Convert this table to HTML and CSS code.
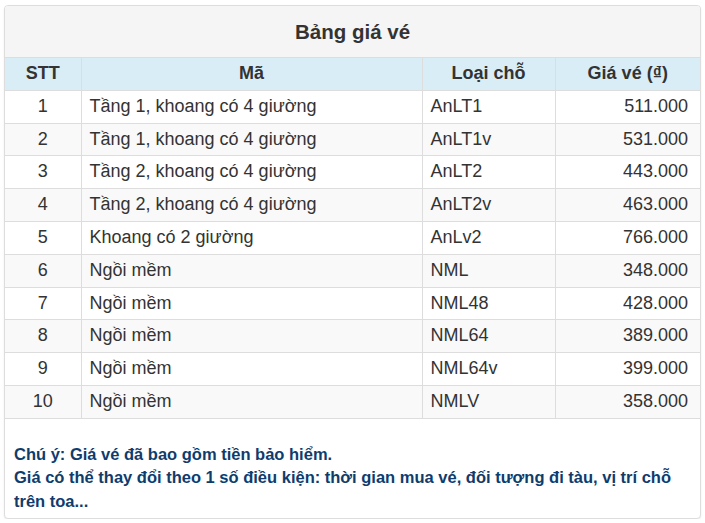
FILE: index.html
```html
<!DOCTYPE html>
<html lang="vi">
<head>
<meta charset="utf-8">
<link rel="stylesheet" href="styles.css">
</head>
<body>
<div class="panel">
  <div class="panel-heading">Bảng giá vé</div>
  <table class="price-table">
    <colgroup>
      <col class="c-stt"><col class="c-ma"><col class="c-loai"><col class="c-gia">
    </colgroup>
    <thead>
      <tr><th>STT</th><th>Mã</th><th>Loại chỗ</th><th>Giá vé (₫)</th></tr>
    </thead>
    <tbody>
      <tr><td class="num">1</td><td>Tầng 1, khoang có 4 giường</td><td>AnLT1</td><td class="price">511.000</td></tr>
      <tr><td class="num">2</td><td>Tầng 1, khoang có 4 giường</td><td>AnLT1v</td><td class="price">531.000</td></tr>
      <tr><td class="num">3</td><td>Tầng 2, khoang có 4 giường</td><td>AnLT2</td><td class="price">443.000</td></tr>
      <tr><td class="num">4</td><td>Tầng 2, khoang có 4 giường</td><td>AnLT2v</td><td class="price">463.000</td></tr>
      <tr><td class="num">5</td><td>Khoang có 2 giường</td><td>AnLv2</td><td class="price">766.000</td></tr>
      <tr><td class="num">6</td><td>Ngồi mềm</td><td>NML</td><td class="price">348.000</td></tr>
      <tr><td class="num">7</td><td>Ngồi mềm</td><td>NML48</td><td class="price">428.000</td></tr>
      <tr><td class="num">8</td><td>Ngồi mềm</td><td>NML64</td><td class="price">389.000</td></tr>
      <tr><td class="num">9</td><td>Ngồi mềm</td><td>NML64v</td><td class="price">399.000</td></tr>
      <tr><td class="num">10</td><td>Ngồi mềm</td><td>NMLV</td><td class="price">358.000</td></tr>
    </tbody>
  </table>
  <div class="note">
    <p>Chú ý: Giá vé đã bao gồm tiền bảo hiểm.</p>
    <p>Giá có thể thay đổi theo 1 số điều kiện: thời gian mua vé, đối tượng đi tàu, vị trí chỗ trên toa...</p>
  </div>
</div>
</body>
</html>
```
FILE: styles.css
```css
html, body {
  margin: 0;
  padding: 0;
  background: #fff;
}
body {
  padding: 5px 4px 0 4px;
  font-family: "Liberation Sans", Arial, sans-serif;
  color: #333;
}
.panel {
  width: 697px;
  height: 514px;
  box-sizing: border-box;
  border: 1px solid #ddd;
  border-radius: 4px;
  box-shadow: 0 1px 2px rgba(0,0,0,0.08);
  overflow: hidden;
  background: #fff;
}
.panel-heading {
  background: #f5f5f5;
  border-bottom: 1px solid #ddd;
  height: 52px;
  box-sizing: border-box;
  display: flex;
  align-items: center;
  justify-content: center;
  font-weight: bold;
  font-size: 20.5px;
  color: #333;
  padding-top: 1px;
}
.price-table {
  width: 100%;
  border-collapse: collapse;
  font-size: 18px;
  table-layout: fixed;
}
.c-stt { width: 76px; }
.c-ma { width: 341px; }
.c-loai { width: 133px; }
.c-gia { width: auto; }
.price-table th, .price-table td {
  border: 1px solid #ddd;
  padding: 4px 8px;
  line-height: 23.8px;
  height: 23.8px;
  white-space: nowrap;
}
.price-table tr > :first-child { border-left: none; }
.price-table tr > :last-child { border-right: none; }
.price-table thead th {
  background: #d9edf7;
  text-align: center;
  font-weight: bold;
  border-top: none;
  padding-top: 4px;
}
.price-table tbody tr:nth-child(even) td {
  background: #f9f9f9;
}
.price-table td.num { text-align: center; }
.price-table td.price { text-align: right; padding-right: 12px; }
.note {
  padding: 24px 10px 0 9px;
  color: #0f3c6c;
  font-weight: bold;
  font-size: 16.5px;
  line-height: 23.6px;
}
.note p { margin: 0; }
```
